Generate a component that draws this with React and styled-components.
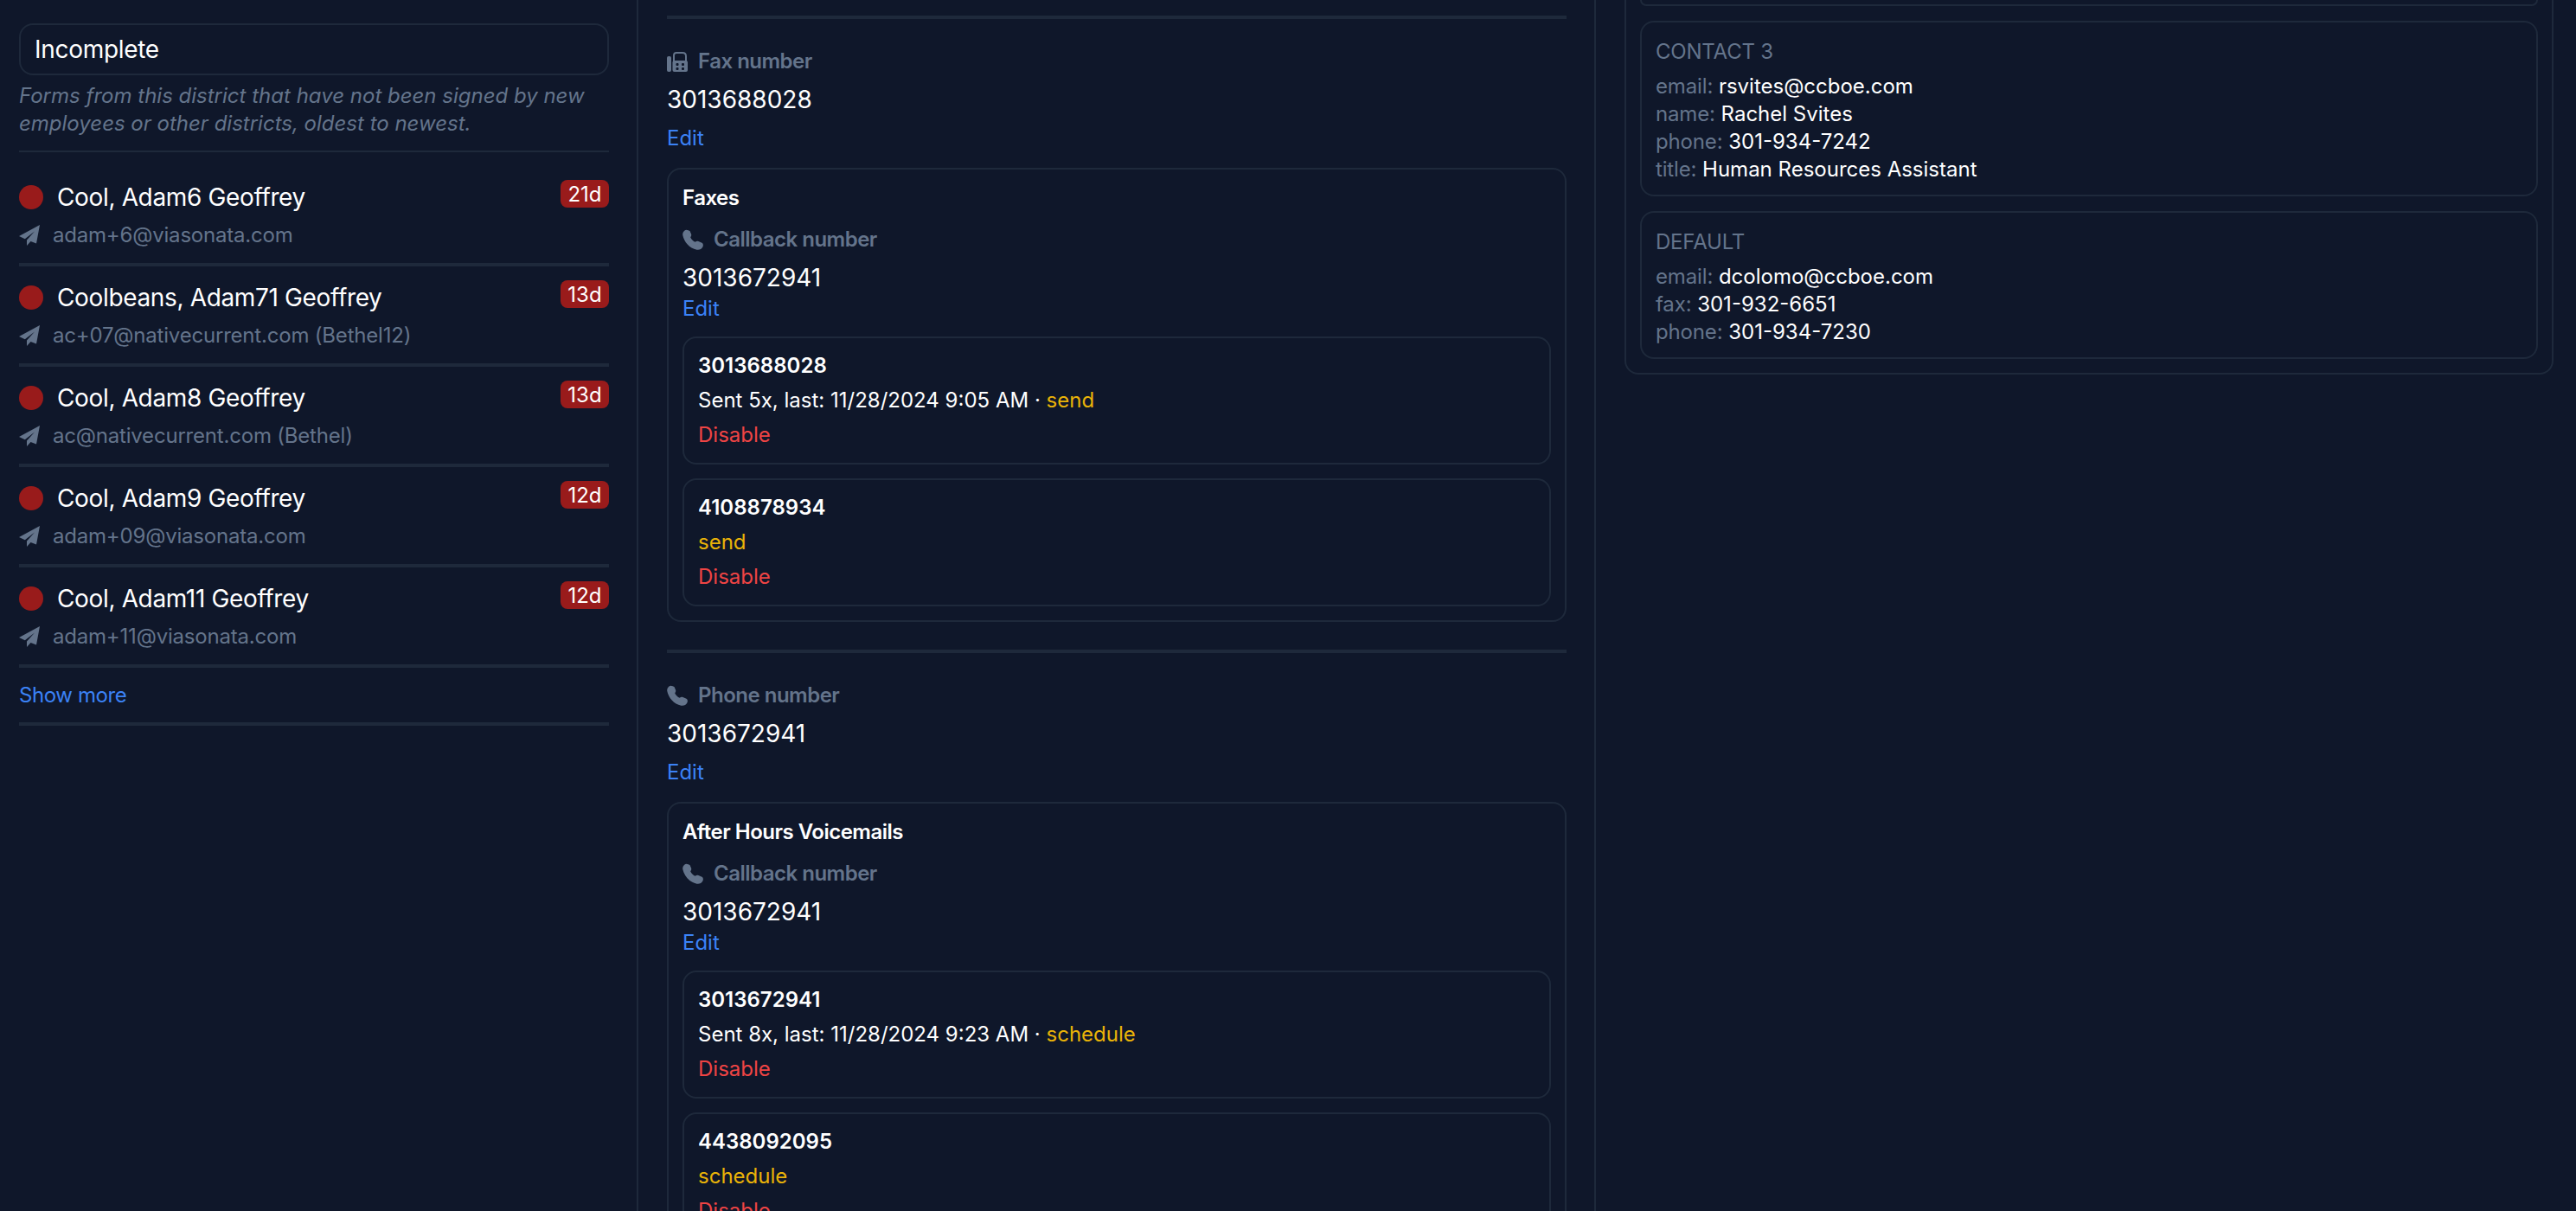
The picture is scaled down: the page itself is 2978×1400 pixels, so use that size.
import React from "react";
import styled, { createGlobalStyle } from "styled-components";

const GlobalStyle = createGlobalStyle`
  html, body {
    margin: 0;
    background: #0f172a;
    font-family: Inter, "Liberation Sans", sans-serif;
    color: #fff;
  }
`;

const Page = styled.div`
  display: grid;
  grid-template-columns: 738px 1107px 1133px;
  width: 2978px;
  height: 1400px;
  overflow: hidden;
  background: #0f172a;
`;

const Column = styled.div`
  padding: ${(p) => p.$padding};
  border-right: ${(p) => (p.$last ? "none" : "2px solid #1e293b")};
  overflow: hidden;
`;

const FilterBox = styled.div`
  height: 56px;
  margin-top: 27px;
  padding: 0 16px;
  display: flex;
  align-items: center;
  border: 2px solid #1e293b;
  border-radius: 16px;
  font-size: 28px;
  letter-spacing: -0.3px;
`;

const Helper = styled.p`
  margin: 8px 0 14px;
  padding-bottom: 15px;
  border-bottom: 2px solid #1e293b;
  font-size: 24px;
  line-height: 32px;
  font-style: italic;
  color: #64748b;
`;

const Row = styled.div`
  padding: 16px 0;
  margin-top: ${(p) => (p.$first ? "32px" : "0")};
  padding-top: ${(p) => (p.$first ? "0" : "16px")};
  border-bottom: 4px solid #1e293b;
`;

const RowTop = styled.div`
  display: flex;
  align-items: flex-start;
  justify-content: space-between;
`;

const Name = styled.div`
  display: flex;
  align-items: center;
  gap: 16px;
  font-size: 28px;
  line-height: 40px;
  letter-spacing: -0.35px;
`;

const Dot = styled.span`
  width: 28px;
  height: 28px;
  border-radius: 50%;
  background: #991b1b;
`;

const Badge = styled.span`
  height: 32px;
  width: 56px;
  display: flex;
  align-items: center;
  justify-content: center;
  border-radius: 8px;
  background: #991b1b;
  font-size: 24px;
`;

const Email = styled.div`
  display: flex;
  align-items: center;
  gap: 15px;
  margin-top: 8px;
  font-size: 24px;
  line-height: 32px;
  letter-spacing: -0.2px;
  color: #64748b;
`;

const ShowMore = styled.div`
  padding: 16px 0 15px;
  border-bottom: 4px solid #1e293b;
  font-size: 24px;
  line-height: 32px;
  letter-spacing: -0.4px;
  color: #3b82f6;
`;

const Section = styled.div`
  padding: 33px 0 32px;
  border-top: 4px solid #1e293b;
  margin-top: ${(p) => p.$top || "0"};
`;

const Label = styled.div`
  display: flex;
  align-items: center;
  gap: 12px;
  font-size: 24px;
  line-height: 32px;
  font-weight: 600;
  letter-spacing: -0.5px;
  color: #64748b;
`;

const Value = styled.div`
  margin-top: 8px;
  font-size: 28px;
  line-height: 40px;
`;

const Edit = styled.div`
  margin-top: ${(p) => (p.$tight ? "0" : "9px")};
  font-size: 24px;
  line-height: 32px;
  color: #3b82f6;
`;

const Card = styled.div`
  margin-top: ${(p) => p.$gap || "16px"};
  padding: 16px;
  border: 2px solid #1e293b;
  border-radius: 16px;
`;

const CardTitle = styled.div`
  margin: 1px 0 16px;
  font-size: 24px;
  line-height: 32px;
  font-weight: 600;
  letter-spacing: -0.5px;
`;

const Number = styled.div`
  font-size: 24px;
  line-height: 32px;
  font-weight: 600;
`;

const Line = styled.div`
  margin-top: 8px;
  font-size: 24px;
  line-height: 32px;
  color: ${(p) => p.$color || "#fff"};
`;

const Action = styled.span`
  color: #eab308;
`;

const ClippedOuter = styled.div`
  margin-right: -2px;
  padding: 0 16px 16px;
  border: 2px solid #1e293b;
  border-top: 0;
  border-radius: 0 0 16px 16px;
`;

const ClippedCard = styled.div`
  height: 5px;
  border: 2px solid #1e293b;
  border-top: 0;
  border-radius: 0 0 16px 16px;
`;

const ContactCard = styled.div`
  margin-top: 17px;
  padding: 18px 16px 13px;
  border: 2px solid #1e293b;
  border-radius: 16px;
`;

const ContactTitle = styled.div`
  margin-bottom: 8px;
  font-size: 24px;
  line-height: 32px;
  color: #64748b;
  text-transform: uppercase;
  letter-spacing: -0.2px;
`;

const ContactLine = styled.div`
  font-size: 24px;
  line-height: 32px;
`;

const Key = styled.span`
  color: #64748b;
  letter-spacing: -0.15px;
`;

const PlaneIcon = () => (
  <svg width="24" height="24" viewBox="0 0 24 24" fill="currentColor">
    <path d="M24 0 0 13l6.8 3.2L18 7.5l-9 10V24l4.5-5 6.5 2.5L24 0Z" />
  </svg>
);

const PhoneIcon = () => (
  <svg width="24" height="24" viewBox="0 0 24 24" fill="currentColor">
    <path d="M2.5 1.5C4.5-.2 7.500 2 8.5 2L10 5.500C10.600 7 10.200 8.300 9.200 9.200C10 11.500 12.500 14 14.800 14.800C15.800 13.800 17 13.400 18.500 14L22.500 15.800C24 16.600 24.300 19 23.200 20.800C22 23 19.500 24.300 16.500 23.700C8 22 1.800 14.500.3 7C-.1 5 .8 3 2.500 1.500Z" />
  </svg>
);

const FaxIcon = () => (
  <svg width="24" height="24" viewBox="0 0 24 24" fill="currentColor">
    <rect x="0" y="6" width="5" height="18" rx="2" />
    <path d="M8 12V5c0-2 1-3 3-3h7c3 0 4 2 4 4v6" fill="none" stroke="currentColor" strokeWidth="2" />
    <rect x="6.5" y="11" width="17.5" height="13" rx="2" />
    <g fill="#0f172a">
      <rect x="10.5" y="14" width="3" height="3" rx="1" />
      <rect x="17" y="14" width="3" height="3" rx="1" />
      <rect x="10.5" y="19" width="3" height="3" rx="1" />
      <rect x="17" y="19" width="3" height="3" rx="1" />
    </g>
  </svg>
);

const people = [
  { name: "Cool, Adam6 Geoffrey", email: "adam+6@viasonata.com", age: "21d" },
  { name: "Coolbeans, Adam71 Geoffrey", email: "ac+07@nativecurrent.com (Bethel12)", age: "13d" },
  { name: "Cool, Adam8 Geoffrey", email: "ac@nativecurrent.com (Bethel)", age: "13d" },
  { name: "Cool, Adam9 Geoffrey", email: "adam+09@viasonata.com", age: "12d" },
  { name: "Cool, Adam11 Geoffrey", email: "adam+11@viasonata.com", age: "12d" },
];

const contacts = [
  {
    title: "Contact 3",
    lines: [
      ["email", "rsvites@ccboe.com"],
      ["name", "Rachel Svites"],
      ["phone", "301-934-7242"],
      ["title", "Human Resources Assistant"],
    ],
  },
  {
    title: "Default",
    lines: [
      ["email", "dcolomo@ccboe.com"],
      ["fax", "301-932-6651"],
      ["phone", "301-934-7230"],
    ],
  },
];

function Recipient({ number, sent, action }) {
  return (
    <Card>
      <Number>{number}</Number>
      {sent ? (
        <Line>
          {sent} · <Action>{action}</Action>
        </Line>
      ) : (
        <Line $color="#eab308">{action}</Line>
      )}
      <Line $color="#ef4444">Disable</Line>
    </Card>
  );
}

function Group({ title, recipients }) {
  return (
    <Card $gap="18px">
      <CardTitle>{title}</CardTitle>
      <Label>
        <PhoneIcon />
        Callback number
      </Label>
      <Value>3013672941</Value>
      <Edit $tight>Edit</Edit>
      {recipients.map((r) => (
        <Recipient key={r.number} {...r} />
      ))}
    </Card>
  );
}

export default function App() {
  return (
    <Page>
      <GlobalStyle />
      <Column $padding="0 32px 0 22px">
        <FilterBox>Incomplete</FilterBox>
        <Helper>Forms from this district that have not been signed by new employees or other districts, oldest to newest.</Helper>
        {people.map((p, i) => (
          <Row key={p.name} $first={i === 0}>
            <RowTop>
              <Name>
                <Dot />
                {p.name}
              </Name>
              <Badge>{p.age}</Badge>
            </RowTop>
            <Email>
              <PlaneIcon />
              {p.email}
            </Email>
          </Row>
        ))}
        <ShowMore>Show more</ShowMore>
      </Column>
      <Column $padding="0 32px 0 33px">
        <Section $top="18px">
          <Label>
            <FaxIcon />
            Fax number
          </Label>
          <Value>3013688028</Value>
          <Edit>Edit</Edit>
          <Group
            title="Faxes"
            recipients={[
              { number: "3013688028", sent: "Sent 5x, last: 11/28/2024 9:05 AM", action: "send" },
              { number: "4108878934", action: "send" },
            ]}
          />
        </Section>
        <Section>
          <Label>
            <PhoneIcon />
            Phone number
          </Label>
          <Value>3013672941</Value>
          <Edit>Edit</Edit>
          <Group
            title="After Hours Voicemails"
            recipients={[
              { number: "3013672941", sent: "Sent 8x, last: 11/28/2024 9:23 AM", action: "schedule" },
              { number: "4438092095", action: "schedule" },
            ]}
          />
        </Section>
      </Column>
      <Column $last $padding="0 28px 0 33px">
        <ClippedOuter>
          <ClippedCard />
          {contacts.map((c) => (
            <ContactCard key={c.title}>
              <ContactTitle>{c.title}</ContactTitle>
              {c.lines.map(([k, v]) => (
                <ContactLine key={k}>
                  <Key>{k}:</Key> {v}
                </ContactLine>
              ))}
            </ContactCard>
          ))}
        </ClippedOuter>
      </Column>
    </Page>
  );
}
